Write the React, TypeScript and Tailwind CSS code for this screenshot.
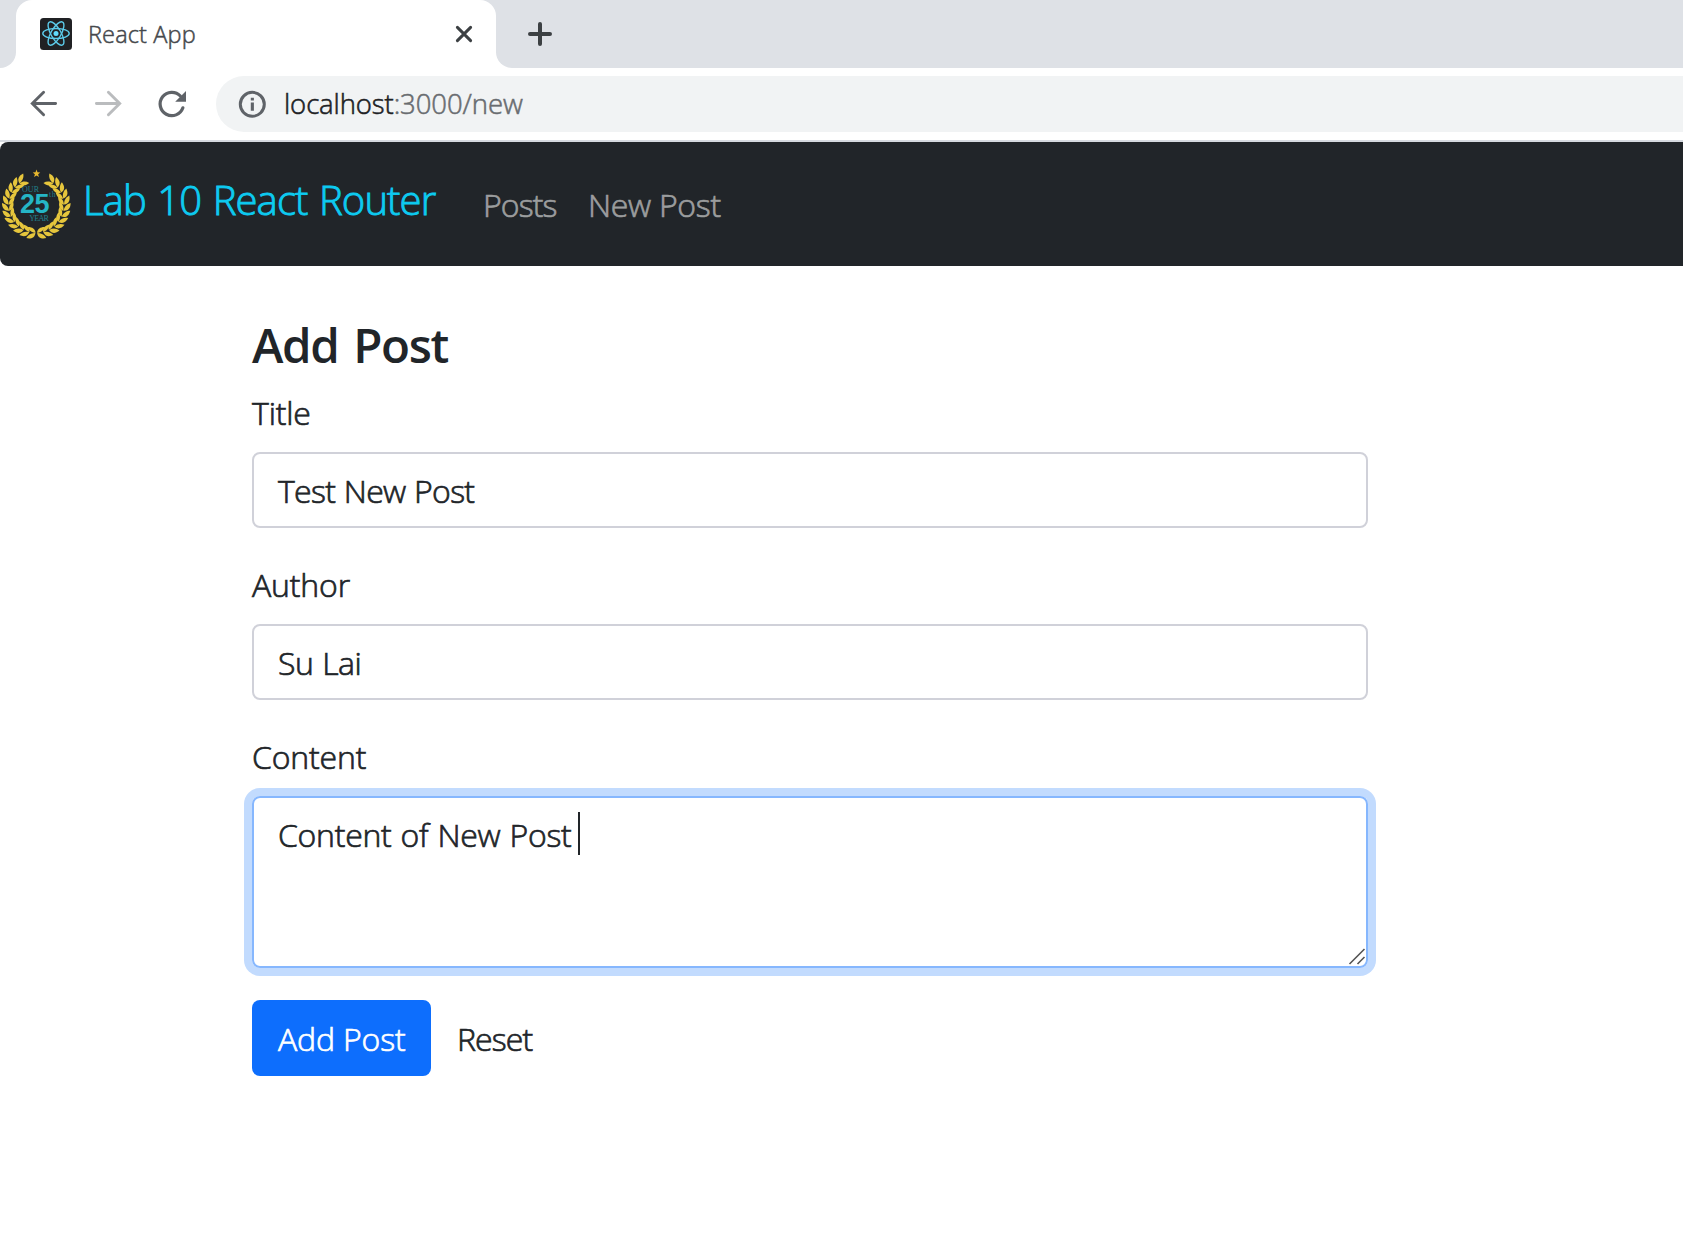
import React from 'react';

const rad = (deg: number) => (deg * Math.PI) / 180;

function ReactLogo() {
  return (
    <svg width="32" height="32" viewBox="0 0 32 32" className="shrink-0">
      <rect width="32" height="32" rx="3.5" fill="#202124" />
      <circle cx="16" cy="15.5" r="2.5" fill="#61dafb" />
      <g fill="none" stroke="#5ccbea" strokeWidth="1.4">
        <ellipse cx="16" cy="15.5" rx="13.2" ry="5" />
        <ellipse cx="16" cy="15.5" rx="13.2" ry="5" transform="rotate(60 16 15.5)" />
        <ellipse cx="16" cy="15.5" rx="13.2" ry="5" transform="rotate(120 16 15.5)" />
      </g>
    </svg>
  );
}

function Laurel() {
  const steps = Array.from({ length: 12 }, (_, i) => 3 + i * 12.8);
  const arm = steps.map((a) => {
    const t = rad(a);
    const x = 36.3 - 28 * Math.sin(t);
    const y = 43.2 + 28 * Math.cos(t);
    return { a, x, y };
  });
  const side = (
    <g fill="#e6c63c">
      {arm.map(({ a, x, y }) => (
        <g key={a} transform={`translate(${x.toFixed(2)} ${y.toFixed(2)}) rotate(${(a - 90).toFixed(1)})`}>
          <path d="M0.2 0.6C-4.6 0.2 -6.2 -3.4 -5.4 -8.2C-2.2 -6.8 0.2 -4 0.2 0.6Z" />
          <path d="M0.4 0.8C4.2 0 6.2 -3 5.8 -7.4C2.6 -6 0.4 -3.6 0.4 0.8Z" />
        </g>
      ))}
    </g>
  );
  return (
    <svg width="72" height="84" viewBox="0 0 72 84" className="shrink-0 [-webkit-text-stroke:0]">
      {side}
      <g transform="translate(72.6 0) scale(-1 1)">{side}</g>
      <path d="M36.5 7.6L37.5 10.3L40.3 10.4L38.1 12.2L38.9 15L36.5 13.4L34.1 15L34.9 12.2L32.7 10.4L35.5 10.3Z" fill="#e9b92f" />
      <g fontFamily="Liberation Serif, serif" fontWeight="400" fill="#22808c">
        <text x="22" y="29.6" fontSize="8" textLength="17">OUR</text>
        <text x="49" y="34.8" fontSize="7.5" textLength="6.5">th</text>
        <text x="29.3" y="59.2" fontSize="8" textLength="19.5">YEAR</text>
      </g>
      <text x="20" y="51" fontSize="27" textLength="29.5" fontWeight="700" fill="#25b5c6" fontFamily="Liberation Sans, sans-serif">25</text>
    </svg>
  );
}

function TabStrip() {
  return (
    <div className="flex h-[68px] bg-[#dee1e6]">
      <div className="w-4 bg-white">
        <div className="h-full rounded-br-2xl bg-[#dee1e6]" />
      </div>
      <div className="flex h-full w-[480px] items-center rounded-t-2xl bg-white pl-6 pr-[22px]">
        <ReactLogo />
        <span className="ml-4 flex-1 whitespace-nowrap text-[23.5px] leading-[32px] tracking-[0.15px] text-[#45484c] [-webkit-text-stroke:0.5px]">React App</span>
        <svg width="20" height="20" viewBox="0 0 20 20" stroke="#3c4043" strokeWidth="3" strokeLinecap="round">
          <path d="M3.4 3.4L16.6 16.6M16.6 3.4L3.4 16.6" />
        </svg>
      </div>
      <div className="flex-1 bg-white">
        <div className="flex h-full items-center rounded-bl-2xl bg-[#dee1e6] pl-8">
          <svg width="24" height="24" viewBox="0 0 24 24" stroke="#3c4043" strokeWidth="4" strokeLinecap="round">
            <path d="M12 2V22M2 12H22" />
          </svg>
        </div>
      </div>
    </div>
  );
}

function Toolbar() {
  return (
    <div className="flex h-[74px] items-center border-b-2 border-[#d6dae0] bg-white pl-7">
      <svg width="32" height="32" viewBox="0 0 32 32" fill="none" stroke="#5f6368" strokeWidth="2.9" strokeLinecap="round" className="shrink-0">
        <path d="M4.5 15.5H27.6M15.6 4.2L4.3 15.5L15.6 26.8" />
      </svg>
      <svg width="32" height="32" viewBox="0 0 32 32" fill="none" stroke="#babcbe" strokeWidth="2.9" strokeLinecap="round" className="ml-8 shrink-0">
        <path d="M27.5 15.5H4.4M16.4 4.2L27.7 15.5L16.4 26.8" />
      </svg>
      <svg width="32" height="32" viewBox="0 0 32 32" fill="none" className="ml-8 shrink-0">
        <path d="M26.9 19.8A11.7 11.7 0 1 1 24.4 8" stroke="#5f6368" strokeWidth="3.2" strokeLinecap="round" />
        <path d="M30 3V13.8H19.2Z" fill="#5f6368" />
      </svg>
      <div className="ml-7 flex h-14 flex-1 items-center rounded-l-full bg-[#f1f3f4] pl-[22px]">
        <svg width="28" height="28" viewBox="0 0 28 28" fill="none" className="shrink-0">
          <circle cx="14.3" cy="14.3" r="12" stroke="#5f6368" strokeWidth="3" />
          <path d="M12.8 12.6H15.9V20.8H12.8ZM12.8 7.8H15.9V10.6H12.8Z" fill="#5f6368" />
        </svg>
        <span className="ml-[18px] whitespace-nowrap text-[27.5px] leading-[40px] tracking-[-0.1px] text-[#202124] [-webkit-text-stroke:0.55px]">
          localhost<span className="text-[#696c70]">:3000/new</span>
        </span>
      </div>
    </div>
  );
}

function NavBar() {
  return (
    <nav className="flex h-[124px] items-center whitespace-nowrap rounded-l-lg bg-[#212529] [-webkit-text-stroke:0.7px]">
      <Laurel />
      <a className="mb-[8px] ml-[11px] w-[400px] text-[40px] leading-[60px] tracking-[-0.9px] [word-spacing:2px] text-[#0dcaf0] [-webkit-text-stroke:0.9px]">Lab 10 React Router</a>
      <a className="mt-[2px] w-[105px] text-[32px] leading-[48px] tracking-[-0.9px] text-[#9b9d9e]">Posts</a>
      <a className="mt-[2px] text-[32px] leading-[48px] tracking-[-0.3px] text-[#9b9d9e]">New Post</a>
    </nav>
  );
}

function Field({ label, children }: { label: string; children: React.ReactNode }) {
  return (
    <div className="mb-8">
      <div className="mb-4 h-12 text-[32px] leading-[50px] tracking-[-0.15px]">{label}</div>
      {children}
    </div>
  );
}

export default function App() {
  return (
    <div className="h-[1238px] w-[1683px] overflow-hidden bg-white font-['Open_Sans',sans-serif] font-light text-[#212529]">
      <TabStrip />
      <Toolbar />
      <NavBar />
      <main className="ml-[252px] w-[1116px] whitespace-nowrap pt-12 [-webkit-text-stroke:0.7px]">
        <h1 className="mb-4 h-[58px] text-[47.5px] font-semibold leading-[61px] tracking-[-1.4px] [word-spacing:4px] [-webkit-text-stroke:0]">Add Post</h1>
        <Field label="Title">
          <div className="h-[76px] rounded-lg border-2 border-[#d0d1d9] px-[24px] pt-3 text-[32px] leading-[50px] tracking-[-0.7px] [word-spacing:1px]">
            <span>Test New Post</span>
          </div>
        </Field>
        <Field label="Author">
          <div className="h-[76px] rounded-lg border-2 border-[#d0d1d9] px-[24px] pt-3 text-[32px] leading-[50px] tracking-[-0.5px] [word-spacing:1px]">
            <span>Su Lai</span>
          </div>
        </Field>
        <Field label="Content">
          <div className="flex h-[172px] justify-between rounded-lg border-2 border-[#86b7fe] pl-[24px] pt-3 text-[32px] leading-[50px] tracking-[-0.27px] [word-spacing:1px] shadow-[0_0_0_8px_#c2dbfe]">
            <div className="flex">
              <span className="w-[300px]">Content of New Post</span>
              <span className="mt-[2px] h-[43px] w-[2px] bg-[#212529]" />
            </div>
            <svg width="18" height="20" viewBox="0 0 18 20" stroke="#555" strokeWidth="1.6" className="self-end">
              <path d="M1.5 18L16.5 3M9.5 18L16.5 11" />
            </svg>
          </div>
        </Field>
        <div className="flex text-[32px] leading-[50px]">
          <button className="h-[76px] w-[179px] rounded-lg bg-[#0d6efd] pl-[26px] pt-px text-left tracking-[-0.15px] text-white">Add Post</button>
          <button className="h-[76px] pl-[26px] pt-px text-left tracking-[-0.9px]">Reset</button>
        </div>
      </main>
    </div>
  );
}
